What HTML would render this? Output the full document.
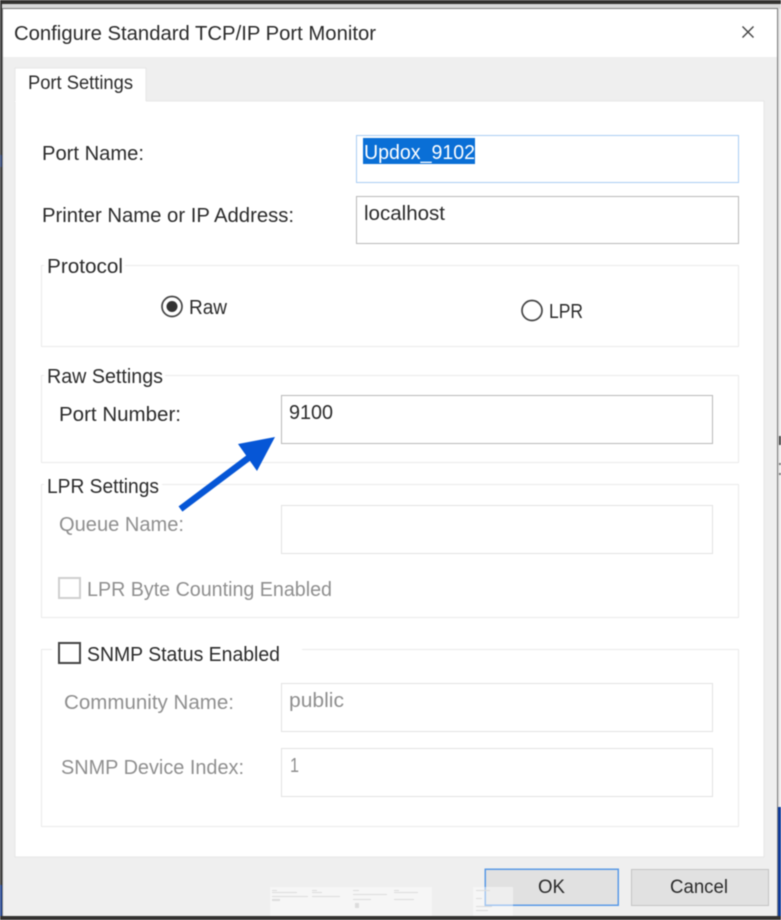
<!DOCTYPE html>
<html><head><meta charset="utf-8"><style>
html,body{margin:0;padding:0;width:781px;height:920px;overflow:hidden;background:#fff}
svg{display:block;filter:blur(.45px)}
text{font-family:"Liberation Sans",sans-serif;font-size:20px;fill:#2b2b2b}
.g{fill:#8f8f8f}
.s{font-size:19px}
</style></head><body>
<svg width="781" height="920" viewBox="0 0 781 920" xmlns="http://www.w3.org/2000/svg" shape-rendering="crispEdges">
<rect width="781" height="920" fill="#d9d9d9"/>
<rect width="781" height="4" fill="#333230"/>
<rect x="0" y="4" width="2" height="912" fill="#333"/>
<rect x="0" y="155" width="2" height="12" fill="#2a3f70"/>
<rect x="0" y="885" width="2" height="31" fill="#1c3f8f"/>
<rect x="779" y="9" width="2" height="907" fill="#ececec"/>
<rect x="779" y="436" width="2" height="9" fill="#444"/>
<rect x="779" y="463" width="2" height="2" fill="#777"/>
<rect x="779" y="473" width="2" height="2" fill="#777"/>
<rect x="778" y="807" width="3" height="109" fill="#0e3a9a"/>
<rect x="2" y="8" width="776" height="908" fill="#7e7e7e"/>
<rect x="3" y="9" width="774" height="48" fill="#fff"/>
<rect x="3" y="57" width="774" height="859" fill="#efefef"/>
<rect x="0" y="916" width="781" height="4" fill="#333230"/>

<text x="14" y="40" textLength="362" lengthAdjust="spacingAndGlyphs">Configure Standard TCP/IP Port Monitor</text>
<path d="M742.500 26.500L753.500 37.500M753.500 26.500L742.500 37.500" stroke="#444" stroke-width="1.400" fill="none" shape-rendering="auto"/>

<rect x="15" y="101" width="749" height="756" fill="#fff" stroke="#e6e6e6"/>
<rect x="15" y="68" width="131" height="34" fill="#fff"/>
<path d="M15 101V68H146V101" fill="none" stroke="#e6e6e6"/>
<text x="28" y="89" class="s" textLength="105" lengthAdjust="spacingAndGlyphs">Port Settings</text>

<text x="42" y="160" textLength="102" lengthAdjust="spacingAndGlyphs">Port Name:</text>
<rect x="356.500" y="135.500" width="382" height="47" fill="#fff" stroke="#a9cdf3"/>
<rect x="363" y="138" width="112" height="26" fill="#0a6fd6"/>
<text x="364" y="159" style="fill:#fff" textLength="111" lengthAdjust="spacingAndGlyphs">Updox_9102</text>

<text x="42" y="222" textLength="252" lengthAdjust="spacingAndGlyphs">Printer Name or IP Address:</text>
<rect x="356.500" y="196.500" width="382" height="47" fill="#fff" stroke="#b8b8b8"/>
<text x="364" y="220" textLength="81" lengthAdjust="spacingAndGlyphs">localhost</text>

<rect x="41.500" y="265.500" width="697" height="81" fill="none" stroke="#ebebeb"/>
<rect x="44" y="258" width="81" height="14" fill="#fff"/>
<text x="47" y="273" textLength="76" lengthAdjust="spacingAndGlyphs">Protocol</text>
<g shape-rendering="auto">
<circle cx="172" cy="306.500" r="10" fill="#fff" stroke="#444" stroke-width="1.700"/>
<circle cx="172" cy="306.500" r="5.500" fill="#333"/>
<circle cx="532" cy="310.500" r="10" fill="#fff" stroke="#444" stroke-width="1.700"/>
</g>
<text x="189" y="314" textLength="38" lengthAdjust="spacingAndGlyphs">Raw</text>
<text x="549" y="318" textLength="34" lengthAdjust="spacingAndGlyphs">LPR</text>

<rect x="41.500" y="375.500" width="697" height="87" fill="none" stroke="#ebebeb"/>
<rect x="44" y="368" width="121" height="14" fill="#fff"/>
<text x="47" y="383" textLength="116" lengthAdjust="spacingAndGlyphs">Raw Settings</text>
<text x="59" y="421" textLength="122" lengthAdjust="spacingAndGlyphs">Port Number:</text>
<rect x="281.500" y="395.500" width="431" height="48" fill="#fff" stroke="#b8b8b8"/>
<text x="289" y="419" textLength="44" lengthAdjust="spacingAndGlyphs">9100</text>

<rect x="41.500" y="484.500" width="697" height="133" fill="none" stroke="#ebebeb"/>
<rect x="44" y="477" width="118" height="14" fill="#fff"/>
<text x="47" y="493" textLength="112" lengthAdjust="spacingAndGlyphs">LPR Settings</text>
<text x="59" y="531" class="g" textLength="125" lengthAdjust="spacingAndGlyphs">Queue Name:</text>
<rect x="281.500" y="505.500" width="431" height="48" fill="#fff" stroke="#e2e2e2"/>
<rect x="59" y="578" width="21" height="20" fill="#fff" stroke="#cfcfcf" stroke-width="2"/>
<text x="87" y="596" class="g" textLength="245" lengthAdjust="spacingAndGlyphs">LPR Byte Counting Enabled</text>

<rect x="41.500" y="649.500" width="697" height="177" fill="none" stroke="#ebebeb"/>
<rect x="52" y="640" width="250" height="20" fill="#fff"/>
<rect x="59" y="643" width="21" height="20" fill="#fff" stroke="#444" stroke-width="2"/>
<text x="87" y="661" textLength="193" lengthAdjust="spacingAndGlyphs">SNMP Status Enabled</text>
<text x="64" y="709" class="g" textLength="170" lengthAdjust="spacingAndGlyphs">Community Name:</text>
<rect x="281.500" y="683.500" width="431" height="48" fill="#fff" stroke="#e2e2e2"/>
<text x="289" y="707" class="g" textLength="55" lengthAdjust="spacingAndGlyphs">public</text>
<text x="61" y="774" class="g" textLength="183" lengthAdjust="spacingAndGlyphs">SNMP Device Index:</text>
<rect x="281.500" y="748.500" width="431" height="48" fill="#fff" stroke="#e2e2e2"/>
<text x="290" y="772" class="g" textLength="9" lengthAdjust="spacingAndGlyphs">1</text>

<rect x="485" y="869" width="133" height="36" fill="#e1e1e1" stroke="#5a9ae6" stroke-width="1.500"/>
<text x="538" y="893" class="s" textLength="27" lengthAdjust="spacingAndGlyphs">OK</text>
<rect x="631.500" y="869.500" width="137" height="36" fill="#e1e1e1" stroke="#c4c4c4"/>
<text x="670" y="893" class="s" textLength="58" lengthAdjust="spacingAndGlyphs">Cancel</text>

<rect x="270" y="887" width="162" height="29" fill="#fff" opacity=".45"/>
<rect x="473" y="887" width="40" height="29" fill="#fff" opacity=".45"/>
<g fill="#dcdcdc">
<rect x="272" y="890" width="5" height="1"/><rect x="272" y="892" width="25" height="1"/><rect x="272" y="896" width="36" height="1"/><rect x="272" y="899" width="8" height="2"/>
<rect x="312" y="890" width="5" height="1"/><rect x="312" y="892" width="10" height="1"/><rect x="312" y="896" width="28" height="1"/>
<rect x="353" y="890" width="6" height="1"/><rect x="353" y="894" width="34" height="1"/><rect x="353" y="899" width="18" height="1"/><rect x="355" y="903" width="4" height="5"/>
<rect x="394" y="890" width="5" height="1"/><rect x="394" y="892" width="24" height="1"/><rect x="394" y="899" width="20" height="1"/>
<rect x="476" y="890" width="14" height="1"/><rect x="476" y="898" width="6" height="1"/><rect x="476" y="906" width="16" height="1"/><rect x="476" y="910" width="12" height="1"/>
</g>
<g shape-rendering="auto">
<path d="M180.500 509L251 456" stroke="#0656d6" stroke-width="6.500" fill="none"/>
<path d="M238 444L275 437L257 471Z" fill="#0656d6"/>
</g>
</svg>
</body></html>
